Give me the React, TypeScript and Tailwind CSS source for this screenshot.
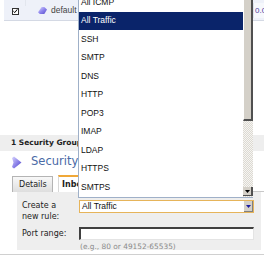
import React from "react";

const ruleTypes = ["All ICMP", "All Traffic", "SSH", "SMTP", "DNS", "HTTP", "POP3", "IMAP", "LDAP", "HTTPS", "SMTPS"];

function Gem({ className }: { className?: string }) {
  return (
    <svg viewBox="0 0 12 10" className={className}>
      <defs>
        <linearGradient id="gemfill" x1="0" y1="0" x2="1" y2="1">
          <stop offset="0" stopColor="#e4e2ff" />
          <stop offset="0.5" stopColor="#8f86ee" />
          <stop offset="1" stopColor="#5548c8" />
        </linearGradient>
      </defs>
      <path d="M1 7 L5 1 L8 1 L11 4 L8 9 L3 9 Z" fill="url(#gemfill)" />
    </svg>
  );
}

function TitleGem() {
  return (
    <svg viewBox="0 0 11 13" className="w-[11px] h-[13px]">
      <defs>
        <linearGradient id="titlegem" x1="0" y1="0" x2="1" y2="1">
          <stop offset="0" stopColor="#d9d6ff" />
          <stop offset="0.55" stopColor="#8a80e8" />
          <stop offset="1" stopColor="#4c42c0" />
        </linearGradient>
      </defs>
      <path d="M1 2 L3 0.5 L10.5 6.5 L3 12.5 L1 11 L2.5 6.5 Z" fill="url(#titlegem)" />
    </svg>
  );
}

export default function App() {
  return (
    <div className="relative w-[264px] h-[258px] overflow-hidden bg-white font-['DejaVu_Sans',sans-serif] text-[8px] text-[#222]">
      {/* grid row */}
      <div className="flex h-[21px] pl-[4px]">
        <div className="flex flex-1 items-center bg-[#eef1f9] border-b border-[#d4d9e4]">
          <div className="w-[22px] h-[6px] self-start border-r border-[#e2e6ee]" />
          <div className="absolute left-[12px] top-[8px] w-[7px] h-[7px] border border-[#333] bg-white">
            <svg viewBox="0 0 7 7" className="w-[5px] h-[5px]">
              <path d="M0.5 3 L2.5 5 L6 0.5" stroke="#000" strokeWidth="1.4" fill="none" />
            </svg>
          </div>
          <div className="flex items-center gap-[3px] ml-[11px]">
            <Gem className="w-[11px] h-[9px]" />
            <span className="font-['Liberation_Sans',sans-serif] text-[8.5px] text-[#444]">default</span>
          </div>
          <div className="ml-auto h-[15px] mb-[-1px] w-[11px] overflow-hidden bg-[#f6f8fc] border-l border-[#dde3ee] flex items-center">
            <span className="font-['Liberation_Sans',sans-serif] text-[8px] text-[#5040a0] pl-[1px]">0.0</span>
          </div>
        </div>
      </div>

      {/* count strip */}
      <div className="mt-[114px] h-[16px] bg-[#eeeeee] flex items-center pl-[11px]">
        <span className="w-[67px] overflow-hidden font-bold text-[7.5px] text-[#222] whitespace-nowrap">1 Security Groups selected</span>
      </div>

      {/* title */}
      <div className="h-[22px] flex items-center pl-[11px] gap-[9px]">
        <TitleGem />
        <span className="w-[47px] overflow-hidden text-[11.5px] text-[#4a6aa6] whitespace-nowrap">Security Group: default</span>
      </div>

      {/* tabs */}
      <div className="mt-[2px] flex items-end h-[17px] pl-[12px] gap-[5px]">
        <div className="w-[41px] h-[16px] border border-[#b4b4b4] border-b-0 bg-linear-to-b from-[#f8f8f8] to-[#dedede] flex items-center pl-[6px]">
          Details
        </div>
        <div className="w-[40px] h-[17px] border-t-2 border-[#f0a838] border-x border-x-[#d8d8d8] bg-white flex items-center pl-[3px] font-bold">
          <span className="w-[16px] overflow-hidden whitespace-nowrap">Inbound</span>
        </div>
        <div className="flex-1 self-end border-b border-[#c8c8c8]" />
      </div>

      {/* rule panel */}
      <div className="ml-[17px] mr-[3px] h-[58px] bg-[#eeeeee] pl-[5px] pt-[8px]">
        <div className="flex">
          <div className="w-[57px] leading-[10.5px] pt-[1px]">
            Create a<br />new rule:
          </div>
          <div className="w-[175px] h-[13px] border border-[#e6b45a] bg-white flex items-center">
            <span className="flex-1 pl-[2px] font-['Liberation_Sans',sans-serif] text-[8.5px] text-[#111]">All Traffic</span>
            <div className="w-[9px] h-[11px] bg-[#d4d0c8] border-r border-b border-[#808080] flex items-center justify-center">
              <svg viewBox="0 0 5 3" className="w-[5px] h-[3px]">
                <path d="M0 0 H5 L2.5 3 Z" fill="#1a1aa0" />
              </svg>
            </div>
          </div>
        </div>
        <div className="flex mt-[5px] items-center">
          <div className="w-[57px]">Port range:</div>
          <div className="w-[175px] h-[13px] border-t-2 border-l-2 border-[#404040] border-r border-b border-r-[#e4e4e4] border-b-[#e4e4e4] bg-white" />
        </div>
        <div className="pl-[58px] mt-[1px] text-[7.4px] text-[#8a8a8a] whitespace-nowrap">(e.g., 80 or 49152-65535)</div>
      </div>
      <div className="mt-[4px] border-t border-[#d0d0d0]" />

      {/* open dropdown list */}
      <div className="absolute left-[78px] top-[-7px] w-[175px] h-[205px] bg-white border-l border-b border-[#9fb0c8] flex font-['Liberation_Sans',sans-serif] text-[8.5px] text-[#111]">
        <ul className="flex-1">
          {ruleTypes.map((t) => (
            <li
              key={t}
              className={
                t === "All Traffic"
                  ? "h-[18.5px] flex items-center pl-[2px] bg-[#0a246a] text-white"
                  : "h-[18.5px] flex items-center pl-[2px]"
              }
            >
              {t}
            </li>
          ))}
        </ul>
        <div className="w-[10px] flex flex-col bg-[repeating-conic-gradient(#dcd9d2_0%_25%,#f6f5f2_0%_50%)] bg-size-[2px_2px]">
          <div className="h-[128px] bg-[#d4d0c8] border-l border-t border-white border-r-2 border-b-2 border-r-[#505050] border-b-[#505050]" />
          <div className="mt-auto h-[9px] bg-[#d4d0c8] border-r-2 border-b border-[#505050] flex items-center justify-center mb-[1px]">
            <svg viewBox="0 0 5 3" className="w-[5px] h-[3px]">
              <path d="M0 0 H5 L2.5 3 Z" fill="#000" />
            </svg>
          </div>
        </div>
      </div>
    </div>
  );
}
